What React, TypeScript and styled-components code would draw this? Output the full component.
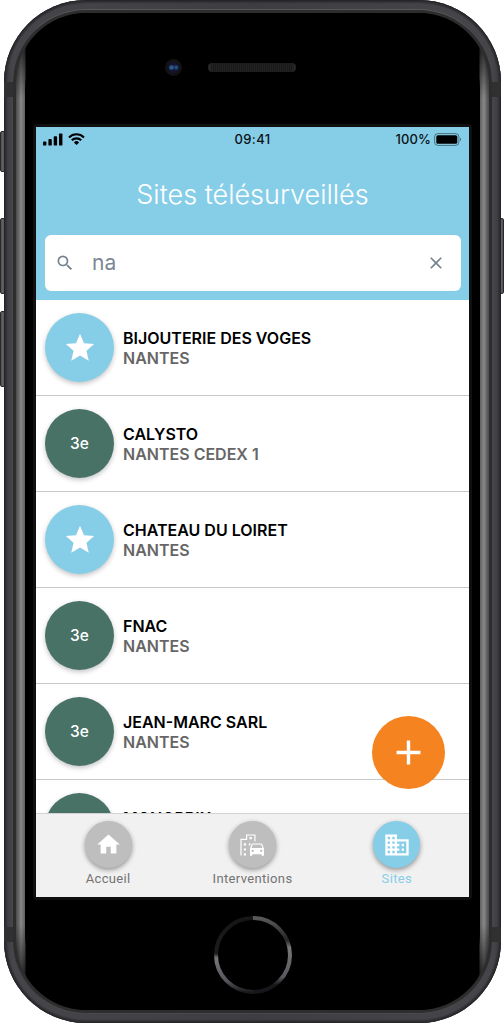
import React from "react";
import styled, { createGlobalStyle } from "styled-components";
import { MdAdd, MdBusiness, MdClose, MdHome, MdSearch, MdStar } from "react-icons/md";

const sky = "#86cee8";

const GlobalStyle = createGlobalStyle`
  *, *::before, *::after { box-sizing: border-box; }
  html, body { margin: 0; background: #fff; }
  body { font-family: Inter, "Liberation Sans", sans-serif; overflow: hidden; }
  button { font: inherit; border: 0; padding: 0; }
`;

const Stage = styled.main`
  position: relative;
  width: 504px;
  height: 1024px;
  padding: 0 3px 0 4px;
  background: #fff;
  overflow: hidden;
`;

const SideKey = styled.span<{ $top: number; $height: number; $right?: boolean }>`
  position: absolute;
  top: ${(p) => p.$top}px;
  ${(p) => (p.$right ? "right: 0;" : "left: 0;")}
  width: 6px;
  height: ${(p) => p.$height}px;
  border-radius: ${(p) => (p.$right ? "0 2px 2px 0" : "2px 0 0 2px")};
  border: 1px solid #29292c;
  background: linear-gradient(${(p) => (p.$right ? "270deg" : "90deg")}, #55555a 0 1px, #6a6a6e 2px, #29292c 4px);
`;

const Chassis = styled.div`
  position: relative;
  height: 1023px;
  padding: 9px 9px 9px 9px;
  border-radius: 82px;
  background: linear-gradient(90deg, #2b2b2f 0, #3d3d43 3px, #45454a 8px, #3d3d42 50%, #45454a calc(100% - 8px), #3d3d43 calc(100% - 3px), #2b2b2f 100%);
  box-shadow: inset 0 0 2px 1px #202023, inset 0 0 1px 3px #36363a;
`;

const AntennaBand = styled.span<{ $top: number; $right?: boolean }>`
  position: absolute;
  top: ${(p) => p.$top}px;
  ${(p) => (p.$right ? "right: 0;" : "left: 0;")}
  width: 9px;
  height: 15px;
  background: #303033;
`;

const Rim = styled.div`
  height: 100%;
  padding: 3px;
  border-radius: 73px;
  background: #2d2d2d;
  border-top: 1px solid #58585a;
  border-bottom: 1px solid #4a4a4c;
`;

const Edge = styled.div`
  height: 100%;
  padding: 0 9px;
  border-radius: 70px;
  overflow: hidden;
  background:
    linear-gradient(180deg, #000 0, #000000c0 30px, transparent 85px, transparent calc(100% - 85px), #000000c0 calc(100% - 30px), #000 100%),
    linear-gradient(90deg, #4b4b4b 0, #6b6b6b 3px, #898989 5px, #606060 9px, #000 10px, #000 calc(100% - 10px), #606060 calc(100% - 9px), #898989 calc(100% - 5px), #6b6b6b calc(100% - 3px), #4b4b4b 100%);
`;

const Glass = styled.div`
  display: flex;
  flex-direction: column;
  align-items: center;
  height: 100%;
  border-radius: 62px / 78px;
  background: #000;
`;

const TopBezel = styled.div`
  position: relative;
  width: 100%;
  height: 111px;
  flex: none;
`;

const Camera = styled.span`
  position: absolute;
  left: 140px;
  top: 46px;
  width: 17px;
  height: 17px;
  border-radius: 50%;
  border: 3px solid #121214;
  background: radial-gradient(circle at 32% 50%, #28588f 0 1.5px, transparent 3px), radial-gradient(circle at 75% 50%, #244f7e 0 1px, transparent 3px), #13152f;
`;

const Speaker = styled.span`
  position: absolute;
  left: 183px;
  top: 50px;
  width: 88px;
  height: 9px;
  border-radius: 5px;
  background: repeating-linear-gradient(90deg, #222 0 1px, #191919 1px 2px);
  box-shadow: inset 0 0 0 1px #1d1d1d, inset 2px 0 1px #333, inset -2px 0 1px #333;
`;

const ScreenFrame = styled.div`
  flex: none;
  border: 3px solid #101010;
  border-radius: 4px;
`;

const Screen = styled.div`
  position: relative;
  display: flex;
  flex-direction: column;
  width: 433px;
  height: 770px;
  background: #fff;
  overflow: hidden;
`;

const Header = styled.header`
  flex: none;
  height: 173px;
  background: ${sky};
`;

const StatusBar = styled.div`
  display: grid;
  grid-template-columns: 1fr auto 1fr;
  align-items: center;
  height: 24px;
  padding: 0 7px;
  font-size: 13px;
  font-weight: 500;
  color: #0c1215;
`;

const StatusGroup = styled.div<{ $end?: boolean }>`
  display: flex;
  align-items: center;
  gap: ${(p) => (p.$end ? 3 : 5)}px;
  justify-content: ${(p) => (p.$end ? "flex-end" : "flex-start")};
`;

const Clock = styled.span`
  letter-spacing: 0.35px;
`;

const Percent = styled.span`
  letter-spacing: 0.1px;
`;

const Title = styled.h1`
  margin: 24px 0 0;
  font-size: 27px;
  line-height: 40px;
  font-weight: 300;
  letter-spacing: 0;
  text-align: center;
  white-space: nowrap;
  color: #fff;
`;

const SearchField = styled.div`
  display: flex;
  align-items: center;
  height: 56px;
  margin: 20px 8px 0 9px;
  padding: 0 15px 0 10px;
  border-radius: 6px;
  background: #fff;
  color: #74818e;
`;

const Query = styled.span`
  flex: 1;
  padding-left: 17px;
  font-size: 21px;
  line-height: 30px;
  color: #7b8794;
`;

const SiteList = styled.ul`
  flex: 1;
  min-height: 0;
  margin: 0;
  padding: 0;
  list-style: none;
  overflow: hidden;
`;

const SiteRow = styled.li`
  display: flex;
  align-items: center;
  gap: 9px;
  height: 96px;
  padding: 0 8px 0 9px;
  border-bottom: 1px solid #c8c8c8;
`;

const Badge = styled.span<{ $favorite?: boolean }>`
  display: flex;
  align-items: center;
  justify-content: center;
  width: 69px;
  height: 69px;
  border-radius: 50%;
  background: ${(p) => (p.$favorite ? sky : "#487265")};
  box-shadow: 0 2px 5px rgba(0, 0, 0, 0.24);
  font-size: 15.5px;
  font-weight: 500;
  color: #fff;
`;

const SiteName = styled.div`
  font-size: 16px;
  line-height: 20px;
  font-weight: 600;
  color: #000;
`;

const SiteCity = styled.div`
  font-size: 16px;
  line-height: 20px;
  font-weight: 600;
  color: #666;
`;

const AddButton = styled.button`
  position: absolute;
  right: 24px;
  bottom: 108px;
  display: flex;
  align-items: center;
  justify-content: center;
  width: 73px;
  height: 73px;
  border-radius: 50%;
  background: #f58320;
  color: #fff;
`;

const TabBar = styled.nav`
  display: grid;
  grid-template-columns: repeat(3, 1fr);
  flex: none;
  height: 84px;
  border-top: 1px solid #d2d2d2;
  background: #f1f1f1;
`;

const Tab = styled.div<{ $active?: boolean }>`
  display: flex;
  flex-direction: column;
  align-items: center;
  padding-top: 7px;
  font-family: Roboto, sans-serif;
  font-size: 13px;
  line-height: 16px;
  letter-spacing: 0.35px;
  color: ${(p) => (p.$active ? sky : "#737373")};
`;

const TabIcon = styled.span<{ $active?: boolean }>`
  display: flex;
  align-items: center;
  justify-content: center;
  width: 47px;
  height: 47px;
  margin-bottom: 3px;
  border-radius: 50%;
  background: ${(p) => (p.$active ? sky : "#bebebe")};
  box-shadow: 0 2px 5px rgba(0, 0, 0, 0.4);
  color: #fff;
`;

const HomeButton = styled.svg`
  flex: none;
  margin-top: 15px;
`;

function Signal() {
  return (
    <svg width="20" height="13" viewBox="0 0 20 13" fill="#000">
      <rect x="0" y="8.6" width="3.4" height="4" rx="0.9" />
      <rect x="5.4" y="6" width="3.4" height="6.6" rx="0.9" />
      <rect x="10.7" y="3.2" width="3.4" height="9.4" rx="0.9" />
      <rect x="16" y="0.4" width="3.4" height="12.2" rx="0.9" />
    </svg>
  );
}

function Wifi() {
  return (
    <svg width="17" height="12" viewBox="0 0 17 12" fill="none" stroke="#000" strokeWidth="2.1">
      <path d="M1 4.4a10.6 10.6 0 0 1 15 0" />
      <path d="M3.8 7.3a6.6 6.6 0 0 1 9.4 0" />
      <path d="M8.5 12 5.9 9.4a3.7 3.7 0 0 1 5.2 0Z" fill="#000" stroke="none" />
    </svg>
  );
}

function Battery() {
  return (
    <svg width="28" height="13" viewBox="0 0 28 13">
      <rect x="0.6" y="0.6" width="24.3" height="11.8" rx="3.2" fill="none" stroke="#000" strokeOpacity="0.45" strokeWidth="1" />
      <rect x="2.3" y="2.2" width="21" height="8.6" rx="1.6" fill="#000" />
      <path d="M26.2 4.6v3.8c1.2-.5 1.2-3.3 0-3.8Z" fill="#000" opacity="0.5" />
    </svg>
  );
}

function CityCar() {
  return (
    <svg width="24" height="22" viewBox="0 0 24 22" fill="#fff">
      <path d="M1 21.5V5.4h5.6V1h8.3v6.3" fill="none" stroke="#fff" strokeWidth="1.2" />
      <path d="M9.5 3h2.3v2.3H9.500zM3.800 9.200h2.200v2.200H3.800zM3.800 14.400h2.200v2.200H3.800zM3.800 19.300h2.200v2.200H3.800zM8.800 9.200h1.500v2.200H8.800z" />
      <path
        transform="translate(7.600 5.500) scale(.78)"
        d="M18.920 6.010C18.720 5.420 18.160 5 17.500 5h-11c-.66 0-1.210.42-1.420 1.010L3 12v8c0 .55.45 1 1 1h1c.55 0 1-.45 1-1v-1h12v1c0 .55.45 1 1 1h1c.55 0 1-.45 1-1v-8l-2.080-5.990zM6.500 16c-.83 0-1.500-.67-1.500-1.500S5.670 13 6.500 13s1.500.67 1.500 1.500S7.330 16 6.500 16zm11 0c-.83 0-1.500-.67-1.500-1.500s.67-1.500 1.500-1.500 1.500.67 1.500 1.500-.67 1.500-1.500 1.500zM5 11l1.500-4.500h11L19 11H5z"
      />
    </svg>
  );
}

const sites = [
  { name: "BIJOUTERIE DES VOGES", city: "NANTES", favorite: true },
  { name: "CALYSTO", city: "NANTES CEDEX 1" },
  { name: "CHATEAU DU LOIRET", city: "NANTES", favorite: true },
  { name: "FNAC", city: "NANTES" },
  { name: "JEAN-MARC SARL", city: "NANTES" },
  { name: "MONOPRIX", city: "NANTES" },
];

export default function App() {
  return (
    <>
      <GlobalStyle />
      <Stage>
        <SideKey $top={131} $height={41} />
        <SideKey $top={218} $height={76} />
        <SideKey $top={311} $height={76} />
        <SideKey $top={218} $height={76} $right />
        <Chassis>
          <AntennaBand $top={82} />
          <AntennaBand $top={82} $right />
          <AntennaBand $top={927} />
          <AntennaBand $top={927} $right />
          <Rim>
            <Edge>
              <Glass>
                <TopBezel>
                  <Camera />
                  <Speaker />
                </TopBezel>
                <ScreenFrame>
                  <Screen>
                    <Header>
                      <StatusBar>
                        <StatusGroup>
                          <Signal />
                          <Wifi />
                        </StatusGroup>
                        <Clock>09:41</Clock>
                        <StatusGroup $end>
                          <Percent>100%</Percent>
                          <Battery />
                        </StatusGroup>
                      </StatusBar>
                      <Title>Sites télésurveillés</Title>
                      <SearchField>
                        <MdSearch size={20} />
                        <Query>na</Query>
                        <MdClose size={20} />
                      </SearchField>
                    </Header>
                    <SiteList>
                      {sites.map((site) => (
                        <SiteRow key={site.name}>
                          <Badge $favorite={site.favorite}>{site.favorite ? <MdStar size={34} /> : "3e"}</Badge>
                          <div>
                            <SiteName>{site.name}</SiteName>
                            <SiteCity>{site.city}</SiteCity>
                          </div>
                        </SiteRow>
                      ))}
                    </SiteList>
                    <TabBar>
                      <Tab>
                        <TabIcon>
                          <MdHome size={27} />
                        </TabIcon>
                        Accueil
                      </Tab>
                      <Tab>
                        <TabIcon>
                          <CityCar />
                        </TabIcon>
                        Interventions
                      </Tab>
                      <Tab $active>
                        <TabIcon $active>
                          <MdBusiness size={28} />
                        </TabIcon>
                        Sites
                      </Tab>
                    </TabBar>
                    <AddButton aria-label="Ajouter">
                      <MdAdd size={41} />
                    </AddButton>
                  </Screen>
                </ScreenFrame>
                <HomeButton width="80" height="80" viewBox="0 0 80 80" fill="none" strokeWidth="4">
                  <defs>
                    <linearGradient id="ringLeft" x1="0" y1="0" x2="0" y2="1">
                      <stop offset="0" stopColor="#161618" />
                      <stop offset="0.48" stopColor="#1c1c1f" />
                      <stop offset="0.54" stopColor="#77777b" />
                      <stop offset="0.85" stopColor="#56565a" />
                      <stop offset="1" stopColor="#1a1a1d" />
                    </linearGradient>
                    <linearGradient id="ringRight" x1="0" y1="0" x2="0" y2="1">
                      <stop offset="0" stopColor="#59595c" />
                      <stop offset="0.3" stopColor="#252528" />
                      <stop offset="0.4" stopColor="#77777a" />
                      <stop offset="0.8" stopColor="#59595d" />
                      <stop offset="0.9" stopColor="#18181b" />
                      <stop offset="1" stopColor="#17171b" />
                    </linearGradient>
                  </defs>
                  <path d="M40 3a37 37 0 0 0 0 74" stroke="url(#ringLeft)" />
                  <path d="M40 3a37 37 0 0 1 0 74" stroke="url(#ringRight)" />
                </HomeButton>
              </Glass>
            </Edge>
          </Rim>
        </Chassis>
      </Stage>
    </>
  );
}
